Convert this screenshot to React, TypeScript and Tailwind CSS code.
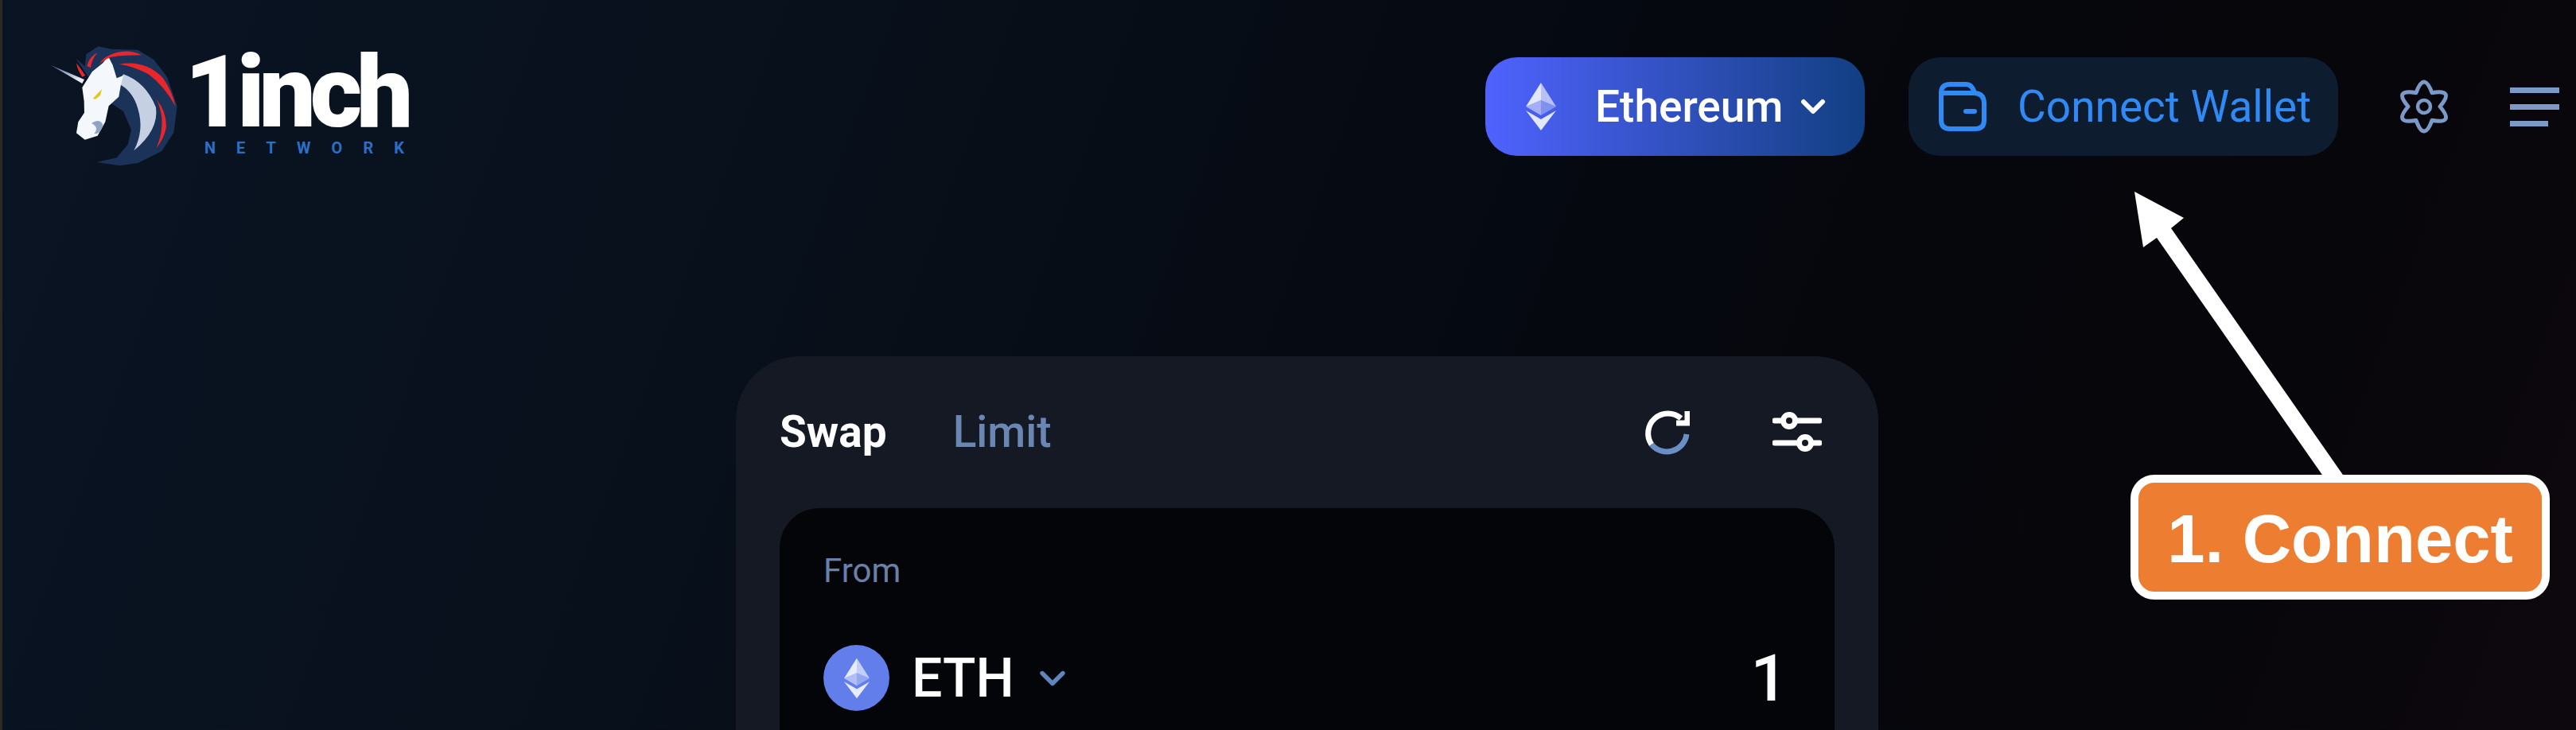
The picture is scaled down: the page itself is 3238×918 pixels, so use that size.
import React from 'react';
import { ChevronDown } from 'lucide-react';

const EthDiamond: React.FC<{ className?: string }> = ({ className }) => (
    <svg viewBox="0 0 38 60" className={className}>
        <polygon points="19,0 0,30 19,22" fill="#ffffff" fillOpacity="0.85" />
        <polygon points="19,0 38,30 19,22" fill="#ffffff" fillOpacity="0.62" />
        <polygon points="0,30 19,22 19,41" fill="#ffffff" fillOpacity="0.5" />
        <polygon points="38,30 19,22 19,41" fill="#ffffff" fillOpacity="0.32" />
        <polygon points="0,35 19,46 38,35 19,60" fill="#ffffff" fillOpacity="0.85" />
    </svg>
);

const Unicorn: React.FC = () => (
    <svg viewBox="0 0 570 540" className="w-[190px] h-[180px] shrink-0">
        <defs>
            <linearGradient id="horn" x1="0" y1="0" x2="1" y2="0.5">
                <stop offset="0" stopColor="#3d5a85" />
                <stop offset="1" stopColor="#e8eef7" />
            </linearGradient>
        </defs>
        {/* dark mane */}
        <path d="M165 100 L200 130 L205 85 L250 55 L300 65 L400 68 L460 105 L510 170 L548 280 L535 380 L490 450 L400 495 L330 505 L245 492 L320 475 L362 425 L375 370 L345 300 L300 270 L220 180 Z" fill="#1b3358" />
        {/* silver neck */}
        <path d="M345 160 Q430 190 468 285 Q480 370 385 448 Q425 370 400 290 Q380 220 325 195 Z" fill="#c5d0e2" />
        {/* head */}
        <path d="M288 92 L305 125 L320 175 L345 165 L335 205 L328 245 L290 280 L277 340 L248 392 L200 407 L168 382 L175 340 L198 305 L197 262 L190 210 L228 150 L268 118 Z" fill="#f4f7fb" />
        <path d="M225 345 Q255 325 268 350 Q262 385 235 385 Q255 360 225 345 Z" fill="#8fa3c2" />
        {/* red strands */}
        <path d="M330 122 Q430 105 495 175 Q530 225 542 282 Q500 205 440 160 Q385 130 330 122 Z" fill="#e8272c" />
        <path d="M252 125 Q270 90 320 78 Q370 65 415 88 Q350 88 300 95 Q270 105 252 125 Z" fill="#e8272c" />
        <path d="M208 130 Q215 95 248 78 Q225 105 222 135 Z" fill="#e8272c" />
        <path d="M168 118 Q185 140 202 165 L190 170 Q172 145 168 118 Z" fill="#e8272c" />
        <path d="M470 255 Q508 300 507 360 Q498 405 470 438 Q495 380 490 325 Q485 285 470 255 Z" fill="#e8272c" />
        {/* horn */}
        <polygon points="70,125 198,180 190,195" fill="url(#horn)" />
        {/* eye */}
        <polygon points="230,252 264,216 258,240 240,254" fill="#e6c520" />
    </svg>
);

const Wallet: React.FC = () => (
    <svg viewBox="0 0 60 62" fill="none" stroke="#2f8af5" strokeWidth="6" className="w-[60px] h-[62px] shrink-0">
        <path d="M3 14 Q3 3 14 3 H34 Q42 3 45 14" />
        <path d="M3 14 V48 Q3 59 14 59 H46 Q57 59 57 48 V27 Q57 14 44 14 H3" />
        <path d="M34 37 H45" strokeLinecap="round" />
    </svg>
);

const Gear: React.FC = () => (
    <svg viewBox="-3 -3 66 74" fill="none" stroke="#7b9ac8" strokeWidth="5" className="w-[66px] h-[74px] shrink-0">
        <path d="M20 16.7 Q30 -10.6 40 16.7 Q69 11.65 50 34 Q69 56.35 40 51.3 Q30 78.7 20 51.3 Q-9 56.35 10 34 Q-9 11.65 20 16.7 Z" strokeLinejoin="round" />
        <circle cx="30" cy="34" r="8" strokeWidth="4.5" />
    </svg>
);

const App: React.FC = () => {
    return (
        <div className="relative flex flex-col h-[918px] overflow-hidden bg-[linear-gradient(110deg,#0a1423_0%,#08101b_30%,#05080f_60%,#07060a_85%,#0d080d_100%)] font-['Roboto',sans-serif]">
            <div className="absolute left-0 top-0 h-full w-[3px] bg-[#2a2c24]"></div>

            {/* Header */}
            <header className="flex items-start justify-between pt-[40px] pl-[40px] pr-[21px] shrink-0">
                <div className="flex items-start">
                    <Unicorn />
                    <div className="flex flex-col ml-[2px]">
                        <span className="mt-[20px] h-[112px] text-[126px] leading-[112px] font-black tracking-[-7px] text-white">1inch</span>
                        <span className="ml-[25px] mt-[4px] text-[20px] leading-[20px] font-bold tracking-[26px] text-[#2b6fc7]">NETWORK</span>
                    </div>
                </div>

                <nav className="flex items-center mt-[32px] h-[124px]">
                    <button className="flex items-center w-[477px] h-[124px] pl-[51px] rounded-[40px] bg-gradient-to-r from-[#4f62ff] to-[#113f82] text-white">
                        <EthDiamond className="w-[38px] h-[60px]" />
                        <span className="ml-[49px] text-[55px] leading-none font-medium">Ethereum</span>
                        <ChevronDown className="ml-[14px] w-[48px] h-[48px]" strokeWidth={3} />
                    </button>
                    <button className="flex items-center w-[540px] h-[124px] ml-[55px] pl-[38px] rounded-[40px] bg-[#0e1c2f] text-[#2f8af5]">
                        <Wallet />
                        <span className="ml-[39px] text-[55px] leading-none">Connect Wallet</span>
                    </button>
                    <div className="ml-[75px]">
                        <Gear />
                    </div>
                    <div className="ml-[75px] flex flex-col gap-[14px] w-[62px]">
                        <div className="h-[7px] bg-[#7b9ac8]"></div>
                        <div className="h-[7px] bg-[#7b9ac8]"></div>
                        <div className="h-[7px] w-[48px] bg-[#7b9ac8]"></div>
                    </div>
                </nav>
            </header>

            {/* Swap card */}
            <main className="flex-1 ml-[925px] mt-[228px] w-[1436px] px-[55px] pt-[60px] rounded-t-[80px] bg-[#141923]">
                <div className="flex items-center justify-between h-[70px]">
                    <div className="flex items-center gap-[83px] text-[55px] leading-none">
                        <span className="font-bold text-white">Swap</span>
                        <span className="font-medium text-[#6a86b3]">Limit</span>
                    </div>
                    <div className="flex items-center gap-[104px] mr-[16px]">
                        <svg viewBox="0 0 58 58" fill="none" strokeWidth="7" className="w-[58px] h-[58px]">
                            <path d="M47 12 A25 25 0 0 0 10 45" stroke="#ffffff" />
                            <path d="M10 45 A25 25 0 0 0 54 32" stroke="#6a8fc4" />
                            <path d="M55 3 V18 H41" stroke="#ffffff" />
                        </svg>
                        <svg viewBox="0 0 62 50" fill="#141923" stroke="#ffffff" strokeWidth="7" className="w-[62px] h-[50px]">
                            <path d="M3 11 H59 M3 39 H59" strokeLinecap="round" />
                            <circle cx="21" cy="11" r="7.5" />
                            <circle cx="41" cy="39" r="7.5" />
                        </svg>
                    </div>
                </div>

                <div className="mt-[61px] h-[400px] pt-[54px] pl-[55px] pr-[59px] rounded-t-[50px] bg-[#030508]">
                    <div className="text-[42px] leading-[50px] text-[#6a80a8]">From</div>
                    <div className="flex items-center justify-between mt-[68px]">
                        <div className="flex items-center">
                            <div className="flex items-center justify-center w-[83px] h-[83px] rounded-full bg-[#627eea]">
                                <EthDiamond className="w-[32px] h-[54px]" />
                            </div>
                            <span className="ml-[28px] text-[68px] leading-none font-medium text-white">ETH</span>
                            <ChevronDown className="ml-[22px] w-[52px] h-[52px] text-[#5f86bd]" strokeWidth={2.5} />
                        </div>
                        <span className="text-[82px] leading-none font-medium text-white">1</span>
                    </div>
                </div>
            </main>

            {/* Annotation over the page */}
            <svg className="absolute left-0 top-0 w-[3238px] h-[918px] pointer-events-none" viewBox="0 0 3238 918">
                <polygon points="2683,241 2745,274 2729,287 2947,600 2921,600 2711,299 2694,311" fill="#ffffff" />
            </svg>
            <div className="absolute left-[2678px] top-[597px] flex items-center justify-center w-[527px] h-[157px] pt-[4px] rounded-[30px] border-[10px] border-white bg-[#ed7d31]">
                <span className="text-[85px] leading-none font-bold text-white font-['Liberation_Sans',sans-serif]">1. Connect</span>
            </div>
        </div>
    );
};

export default App;
